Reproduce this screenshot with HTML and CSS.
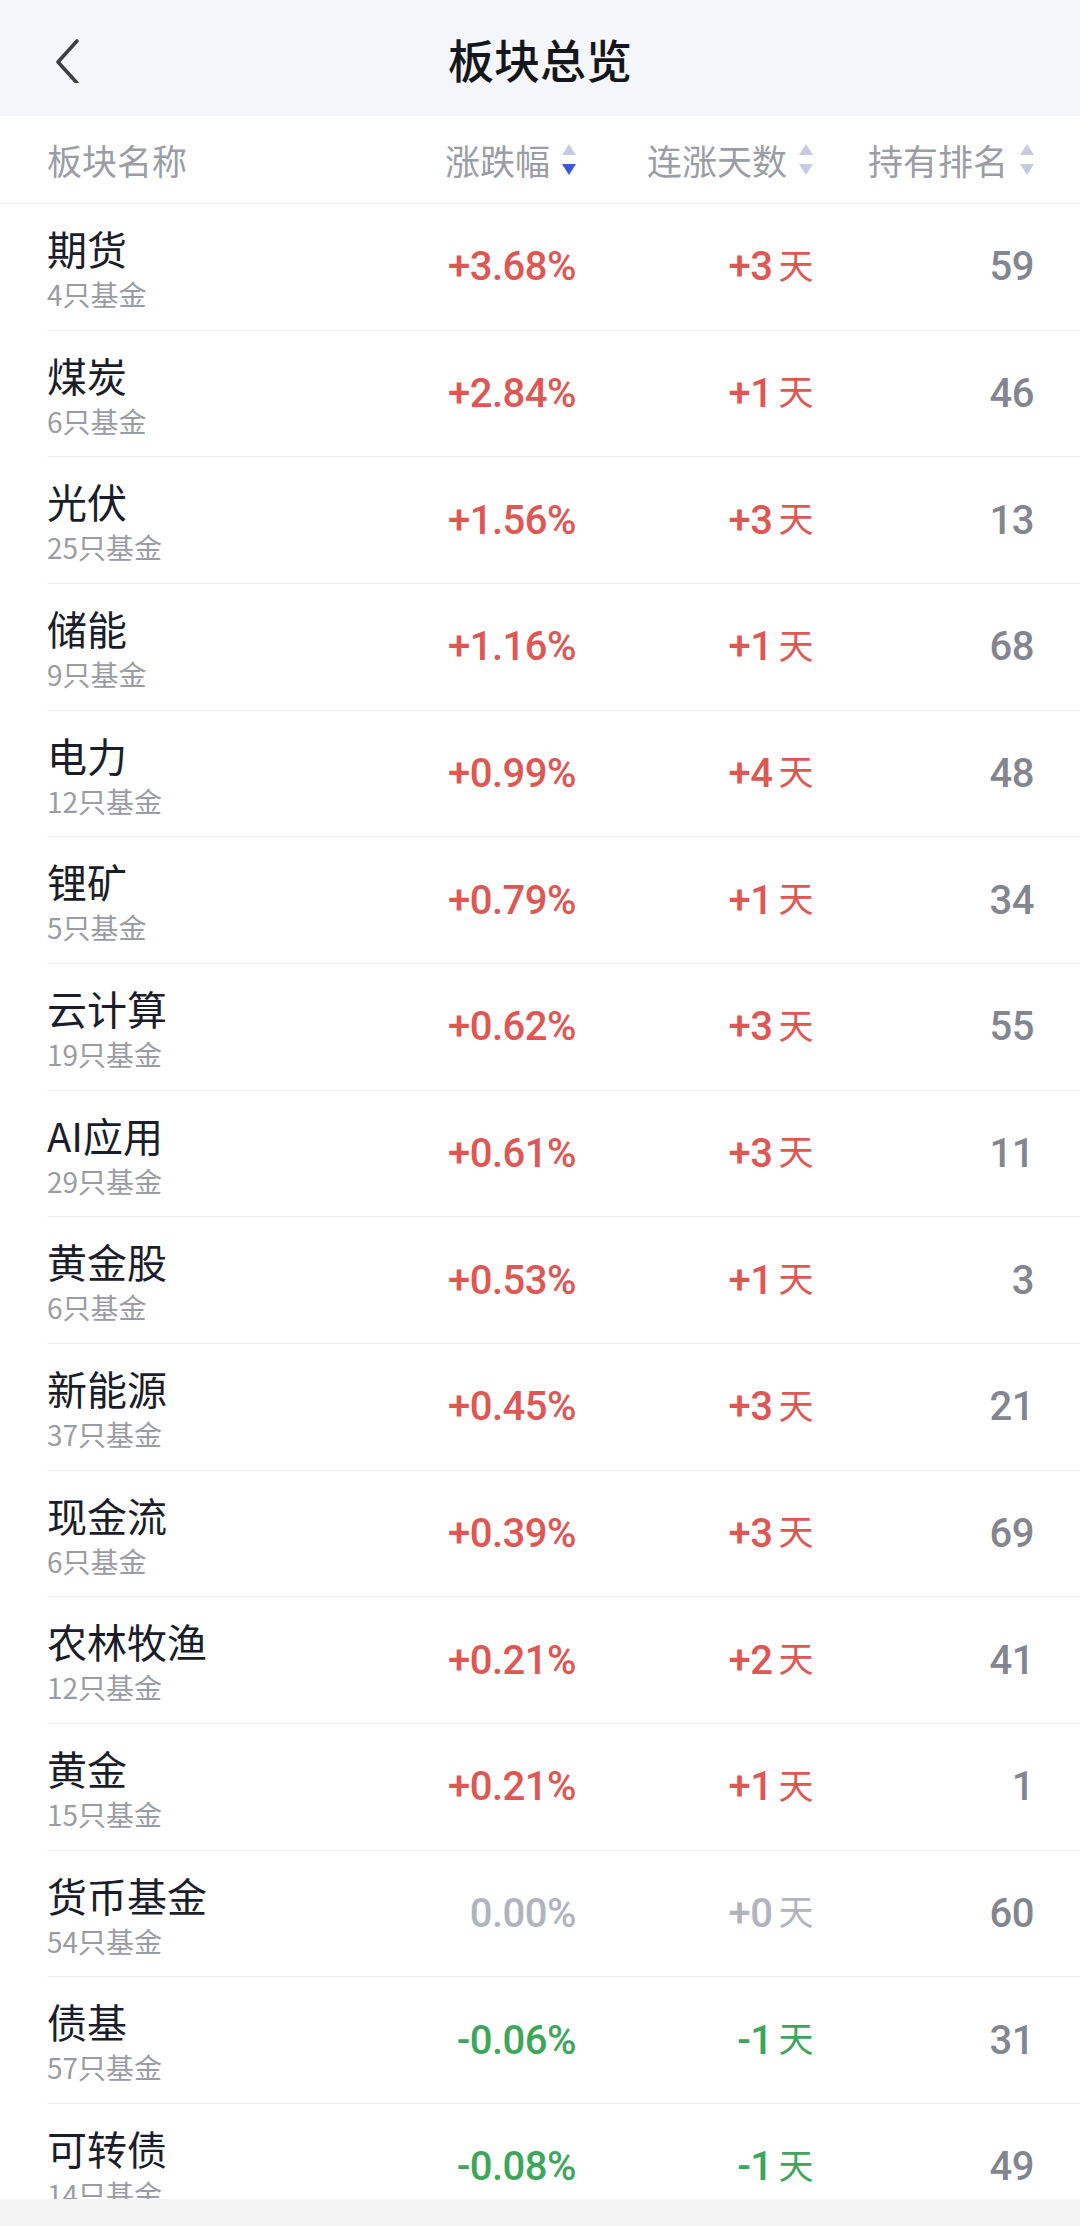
FILE: index.html
```html
<!DOCTYPE html>
<html lang="zh-CN">
<head>
    <meta charset="UTF-8">
    <meta name="viewport" content="width=device-width, initial-scale=1.0">
    <title>板块总览</title>
    <link rel="stylesheet" href="styles.css">
</head>
<body>
    <div class="page">
        <!-- Top bar -->
        <div class="topbar">
            <button class="back-btn">
                <svg width="30" height="50" viewBox="0 0 30 50">
                    <polyline points="23,8 4,29 23,50" fill="none" stroke="#3d3f45" stroke-width="3.6" stroke-linecap="round" stroke-linejoin="round"/>
                </svg>
            </button>
            <h1 class="title">板块总览</h1>
            <div></div>
        </div>

        <!-- Column headers -->
        <div class="table-head">
            <div class="th th-name">板块名称</div>
            <div class="th">涨跌幅
                <svg class="sort" width="14" height="32" viewBox="0 0 14 32">
                    <polygon points="7,0 14,11 0,11" fill="#c7cbe2"/>
                    <polygon points="0,20 14,20 7,31" fill="#3b59d6"/>
                </svg>
            </div>
            <div class="th">连涨天数
                <svg class="sort" width="14" height="32" viewBox="0 0 14 32">
                    <polygon points="7,0 14,11 0,11" fill="#c7cbe2"/>
                    <polygon points="0,20 14,20 7,31" fill="#c7cbe2"/>
                </svg>
            </div>
            <div class="th">持有排名
                <svg class="sort" width="14" height="32" viewBox="0 0 14 32">
                    <polygon points="7,0 14,11 0,11" fill="#c7cbe2"/>
                    <polygon points="0,20 14,20 7,31" fill="#c7cbe2"/>
                </svg>
            </div>
        </div>

        <!-- Sector list -->
        <div class="list">
            <div class="row">
                <div class="name-cell"><div class="name">期货</div><div class="count">4只基金</div></div>
                <div class="num up">+3.68%</div>
                <div class="num up">+3<span class="day">天</span></div>
                <div class="num rank">59</div>
            </div>
            <div class="row">
                <div class="name-cell"><div class="name">煤炭</div><div class="count">6只基金</div></div>
                <div class="num up">+2.84%</div>
                <div class="num up">+1<span class="day">天</span></div>
                <div class="num rank">46</div>
            </div>
            <div class="row">
                <div class="name-cell"><div class="name">光伏</div><div class="count">25只基金</div></div>
                <div class="num up">+1.56%</div>
                <div class="num up">+3<span class="day">天</span></div>
                <div class="num rank">13</div>
            </div>
            <div class="row">
                <div class="name-cell"><div class="name">储能</div><div class="count">9只基金</div></div>
                <div class="num up">+1.16%</div>
                <div class="num up">+1<span class="day">天</span></div>
                <div class="num rank">68</div>
            </div>
            <div class="row">
                <div class="name-cell"><div class="name">电力</div><div class="count">12只基金</div></div>
                <div class="num up">+0.99%</div>
                <div class="num up">+4<span class="day">天</span></div>
                <div class="num rank">48</div>
            </div>
            <div class="row">
                <div class="name-cell"><div class="name">锂矿</div><div class="count">5只基金</div></div>
                <div class="num up">+0.79%</div>
                <div class="num up">+1<span class="day">天</span></div>
                <div class="num rank">34</div>
            </div>
            <div class="row">
                <div class="name-cell"><div class="name">云计算</div><div class="count">19只基金</div></div>
                <div class="num up">+0.62%</div>
                <div class="num up">+3<span class="day">天</span></div>
                <div class="num rank">55</div>
            </div>
            <div class="row">
                <div class="name-cell"><div class="name">AI应用</div><div class="count">29只基金</div></div>
                <div class="num up">+0.61%</div>
                <div class="num up">+3<span class="day">天</span></div>
                <div class="num rank">11</div>
            </div>
            <div class="row">
                <div class="name-cell"><div class="name">黄金股</div><div class="count">6只基金</div></div>
                <div class="num up">+0.53%</div>
                <div class="num up">+1<span class="day">天</span></div>
                <div class="num rank">3</div>
            </div>
            <div class="row">
                <div class="name-cell"><div class="name">新能源</div><div class="count">37只基金</div></div>
                <div class="num up">+0.45%</div>
                <div class="num up">+3<span class="day">天</span></div>
                <div class="num rank">21</div>
            </div>
            <div class="row">
                <div class="name-cell"><div class="name">现金流</div><div class="count">6只基金</div></div>
                <div class="num up">+0.39%</div>
                <div class="num up">+3<span class="day">天</span></div>
                <div class="num rank">69</div>
            </div>
            <div class="row">
                <div class="name-cell"><div class="name">农林牧渔</div><div class="count">12只基金</div></div>
                <div class="num up">+0.21%</div>
                <div class="num up">+2<span class="day">天</span></div>
                <div class="num rank">41</div>
            </div>
            <div class="row">
                <div class="name-cell"><div class="name">黄金</div><div class="count">15只基金</div></div>
                <div class="num up">+0.21%</div>
                <div class="num up">+1<span class="day">天</span></div>
                <div class="num rank">1</div>
            </div>
            <div class="row">
                <div class="name-cell"><div class="name">货币基金</div><div class="count">54只基金</div></div>
                <div class="num flat">0.00%</div>
                <div class="num flat">+0<span class="day">天</span></div>
                <div class="num rank">60</div>
            </div>
            <div class="row">
                <div class="name-cell"><div class="name">债基</div><div class="count">57只基金</div></div>
                <div class="num down">-0.06%</div>
                <div class="num down">-1<span class="day">天</span></div>
                <div class="num rank">31</div>
            </div>
            <div class="row">
                <div class="name-cell"><div class="name">可转债</div><div class="count">14只基金</div></div>
                <div class="num down">-0.08%</div>
                <div class="num down">-1<span class="day">天</span></div>
                <div class="num rank">49</div>
            </div>
        </div>

        <!-- System nav strip -->
        <div class="navbar"></div>
    </div>
</body>
</html>
```

FILE: styles.css
```css
/* Page frame */
body {
    margin: 0;
    background: #ffffff;
    font-family: "Noto Sans CJK SC", "Noto Sans", sans-serif;
}

.page {
    display: flex;
    flex-direction: column;
    height: 100vh;
    overflow: hidden;
}

/* Top bar with back arrow and centered title */
.topbar {
    flex: none;
    height: 116px;
    display: grid;
    grid-template-columns: 1fr auto 1fr;
    align-items: center;
    background: #f5f6fa;
}

.back-btn {
    justify-self: start;
    margin-left: 54px;
    padding: 0;
    background: none;
    border: none;
    display: flex;
}

.title {
    margin: 0;
    font-size: 46px;
    font-weight: 500;
    color: #16171c;
}

/* Column header row */
.table-head {
    flex: none;
    height: 88px;
    box-sizing: border-box;
    padding: 0 46px 0 47px;
    display: grid;
    grid-template-columns: 1fr 237px 237px 221px;
    align-items: center;
    border-bottom: 1px solid #eeeff2;
}

.th {
    display: flex;
    align-items: center;
    justify-content: flex-end;
    gap: 12px;
    font-size: 35px;
    color: #9b9da6;
}

.th-name {
    justify-content: flex-start;
}

/* Rows */
.list {
    flex: 1;
    overflow: hidden;
}

.row {
    height: 126.67px;
    box-sizing: border-box;
    margin-left: 47px;
    padding-right: 46px;
    display: grid;
    grid-template-columns: 1fr 237px 237px 221px;
    align-items: center;
    border-bottom: 1px solid #f1f2f4;
}

.name-cell {
    align-self: start;
    padding-top: 21px;
}

.name {
    font-size: 40px;
    line-height: 46px;
    color: #1b1d2b;
}

.count {
    font-size: 28px;
    line-height: 46px;
    color: #9a9ca3;
}

.num {
    display: flex;
    align-items: center;
    justify-content: flex-end;
    font-family: Roboto, "Noto Sans CJK SC", sans-serif;
    font-size: 40px;
    font-weight: 500;
    letter-spacing: -0.5px;
}

.day {
    font-family: "Noto Sans CJK SC", sans-serif;
    font-size: 35px;
    font-weight: 400;
    margin-left: 6px;
    margin-bottom: 7px;
}

.up {
    color: #e05653;
}

.down {
    color: #3ea65b;
}

.flat {
    color: #b1b4bf;
}

.rank {
    color: #84868f;
}

/* Bottom gesture strip */
.navbar {
    flex: none;
    height: 27px;
    background: #f4f4f5;
}
```
